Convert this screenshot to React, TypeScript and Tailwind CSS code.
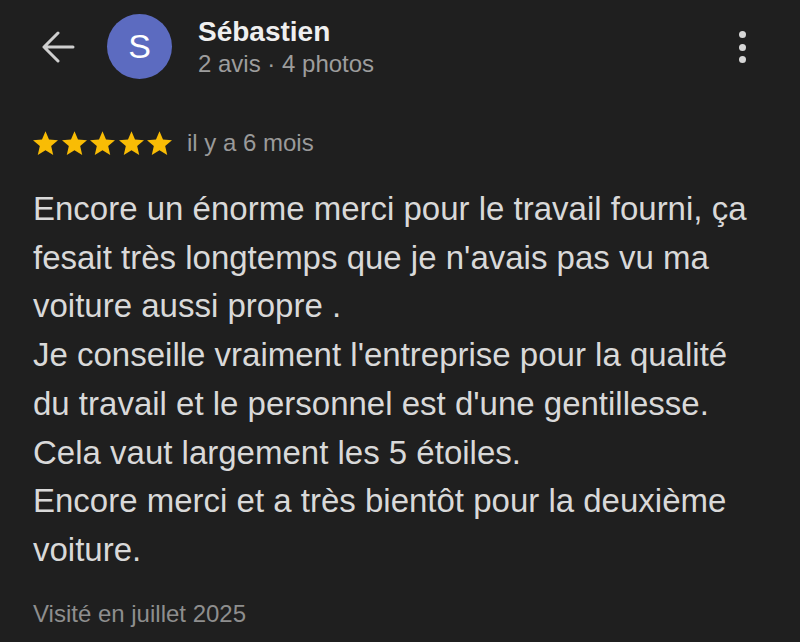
import React from "react";

const lines = [
  "Encore un énorme merci pour le travail fourni, ça fesait très longtemps que je n'avais pas vu ma voiture aussi propre .",
  "Je conseille vraiment l'entreprise pour la qualité du travail et le personnel est d'une gentillesse.",
  "Cela vaut largement les 5 étoiles.",
  "Encore merci et a très bientôt pour la deuxième voiture.",
];

function Star() {
  return (
    <svg viewBox="2 2 20 19" className="w-[25px] h-[24px]" fill="#f9bc05">
      <path d="M12 17.27L18.18 21l-1.64-7.03L22 9.24l-7.19-.61L12 2 9.19 8.63 2 9.24l5.46 4.73L5.82 21z" />
    </svg>
  );
}

export default function App() {
  return (
    <div
      className="w-[800px] h-[642px] bg-[#1f1f1f] overflow-hidden"
      style={{ fontFamily: '"Liberation Sans", Arial, sans-serif' }}
    >
      {/* header */}
      <div className="flex items-start h-[94px]">
        <svg
          viewBox="0 0 34 32"
          className="ml-[41px] mt-[31px] w-[34px] h-[32px]"
          fill="none"
          stroke="#cfcfcf"
          strokeWidth="3"
          strokeLinecap="round"
          strokeLinejoin="round"
        >
          <path d="M32 16H3M17 2L3 16l14 14" />
        </svg>
        <div className="ml-[32px] mt-[14px] w-[65px] h-[65px] rounded-full bg-[#5c6bc0] flex items-center justify-center text-white text-[34px]">
          S
        </div>
        <div className="ml-[26px] mt-[16px] flex flex-col gap-[1px]">
          <span className="text-[#efefef] text-[28px] font-bold leading-[32px]">Sébastien</span>
          <span className="text-[#9d9d9d] text-[24px] leading-[30px]">2 avis · 4 photos</span>
        </div>
        <div className="ml-auto mr-[54px] mt-[31px] flex flex-col gap-[5.5px]">
          <span className="w-[7px] h-[7px] rounded-full bg-[#d6d6d6]" />
          <span className="w-[7px] h-[7px] rounded-full bg-[#d6d6d6]" />
          <span className="w-[7px] h-[7px] rounded-full bg-[#d6d6d6]" />
        </div>
      </div>

      <div className="pl-[33px]">
        {/* rating row */}
        <div className="mt-[37px] flex items-center h-[24px]">
          <div className="flex gap-[3.5px]">
            <Star />
            <Star />
            <Star />
            <Star />
            <Star />
          </div>
          <span className="ml-[15px] text-[#9a9a9a] text-[24px] leading-[24px]">il y a 6 mois</span>
        </div>

        <div className="mt-[30px] text-[#d9d9d9] text-[33px] leading-[48.7px] w-[732px]">
          {lines.map((l, i) => (
            <p key={i}>{l}</p>
          ))}
        </div>

        <div className="mt-[27px] text-[#8e8e8e] text-[24px] leading-[24px]">Visité en juillet 2025</div>
      </div>
    </div>
  );
}
